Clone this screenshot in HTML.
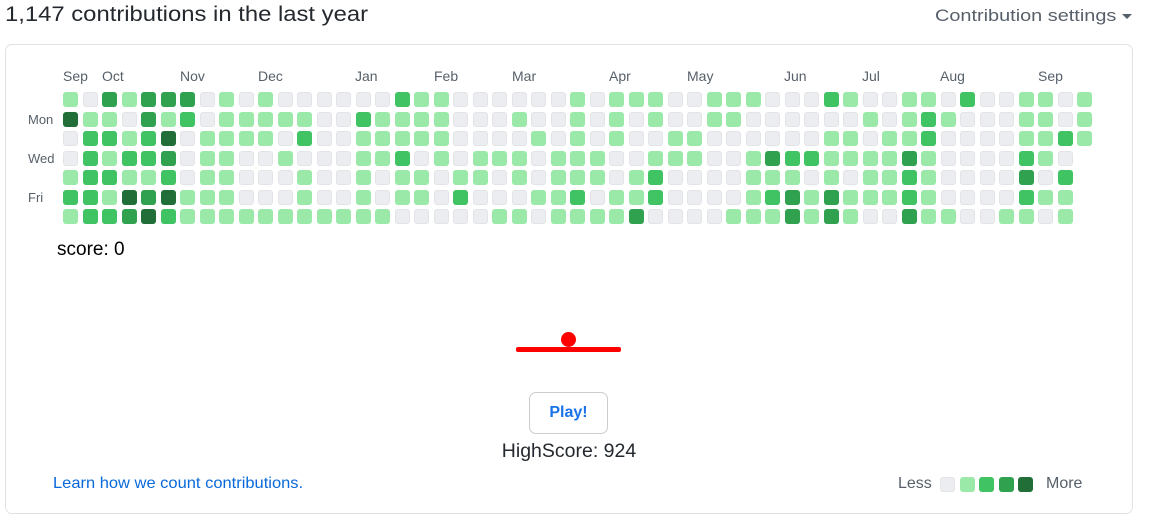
<!DOCTYPE html>
<html><head><meta charset="utf-8"><style>
body{margin:0;width:1150px;height:518px;background:#fff;font-family:"Liberation Sans",sans-serif;position:relative;overflow:hidden;color:#24292f}
.a{position:absolute;white-space:nowrap}
.c{position:absolute;width:15px;height:15px;border-radius:3px;box-sizing:border-box}
.l0{background:#ebedf0;border:1px solid rgba(27,31,35,0.04)}.l1{background:#9be9a8}.l2{background:#40c463}.l3{background:#30a14e}.l4{background:#216e39}
.m{font-size:14px;color:#57606a;top:68px}
.d{font-size:13px;color:#57606a;left:28px}
.s{transform-origin:0 0;display:inline-block}
</style></head><body>
<div class="a" style="left:5px;top:3px;font-size:21px;color:#24292f"><span class="s" style="transform:scaleX(1.135)">1,147 contributions in the last year</span></div>
<div class="a" style="left:935px;top:6px;font-size:17px;color:#57606a"><span class="s" style="transform:scaleX(1.17)">Contribution settings</span></div>
<div class="a" style="left:1122px;top:14px;width:0;height:0;border-left:5px solid transparent;border-right:5px solid transparent;border-top:5px solid #57606a"></div>
<div class="a" style="left:5px;top:44px;width:1126px;height:468px;border:1px solid #e0e3e6;border-radius:7px"></div>
<div class="a m" style="left:63px">Sep</div><div class="a m" style="left:102px">Oct</div><div class="a m" style="left:180px">Nov</div><div class="a m" style="left:258px">Dec</div><div class="a m" style="left:355px">Jan</div><div class="a m" style="left:434px">Feb</div><div class="a m" style="left:512px">Mar</div><div class="a m" style="left:609px">Apr</div><div class="a m" style="left:687px">May</div><div class="a m" style="left:784px">Jun</div><div class="a m" style="left:862px">Jul</div><div class="a m" style="left:940px">Aug</div><div class="a m" style="left:1038px">Sep</div>
<div class="a d" style="top:112px">Mon</div><div class="a d" style="top:151px">Wed</div><div class="a d" style="top:190px">Fri</div>
<div id="g"></div>
<div class="a" style="left:57px;top:239px;font-size:19px;color:#000">score: 0</div>
<div class="a" style="left:516px;top:347px;width:105px;height:5px;background:#f00;border-radius:2px"></div>
<div class="a" style="left:561px;top:332px;width:15px;height:15px;background:#f00;border-radius:50%"></div>
<div class="a" style="left:529px;top:392px;width:77px;height:40px;border:1px solid #ccc;border-radius:7px;text-align:center;line-height:40px;font-size:16px;font-weight:bold;color:#1a73e8">Play!</div>
<div class="a" style="left:0;width:1138px;text-align:center;top:440px;font-size:19.5px;color:#24292f">HighScore: 924</div>
<div class="a" style="left:53px;top:475px;font-size:16px;color:#0969da"><span class="s" style="transform:scaleX(1.03)">Learn how we count contributions.</span></div>
<div class="a" style="left:898px;top:475px;font-size:16px;color:#57606a">Less</div>
<div class="c l0" style="left:940px;top:477px"></div><div class="c l1" style="left:960px;top:477px"></div><div class="c l2" style="left:979px;top:477px"></div><div class="c l3" style="left:999px;top:477px"></div><div class="c l4" style="left:1018px;top:477px"></div>
<div class="a" style="left:1046px;top:475px;font-size:16px;color:#57606a">More</div>
<script>
var R=[
"103133301010000002"+"110000001011100111"+"00021001102001101",
"411031201111100211"+"110001001010100110"+"00000101210001101",
"022124011110200111"+"110000101010011000"+"00011011200001121",
"021223011001000112"+"010111011100111001"+"32211113100002109",
"122112011000100101"+"101101011101200001"+"11010112100003029",
"221434111000100101"+"102000112011200001"+"23131112100002119",
"122342111111111110"+"000011011113000011"+"13131003110011019"];
var h="";
for(var r=0;r<7;r++)for(var i=0;i<53;i++){var v=R[r][i];if(v==="9"||v===undefined)continue;
h+='<div class="c l'+v+'" style="left:'+(63+19.5*i).toFixed(1)+'px;top:'+(92+19.5*r).toFixed(1)+'px"></div>';}
document.getElementById("g").innerHTML=h;
</script>
</body></html>
